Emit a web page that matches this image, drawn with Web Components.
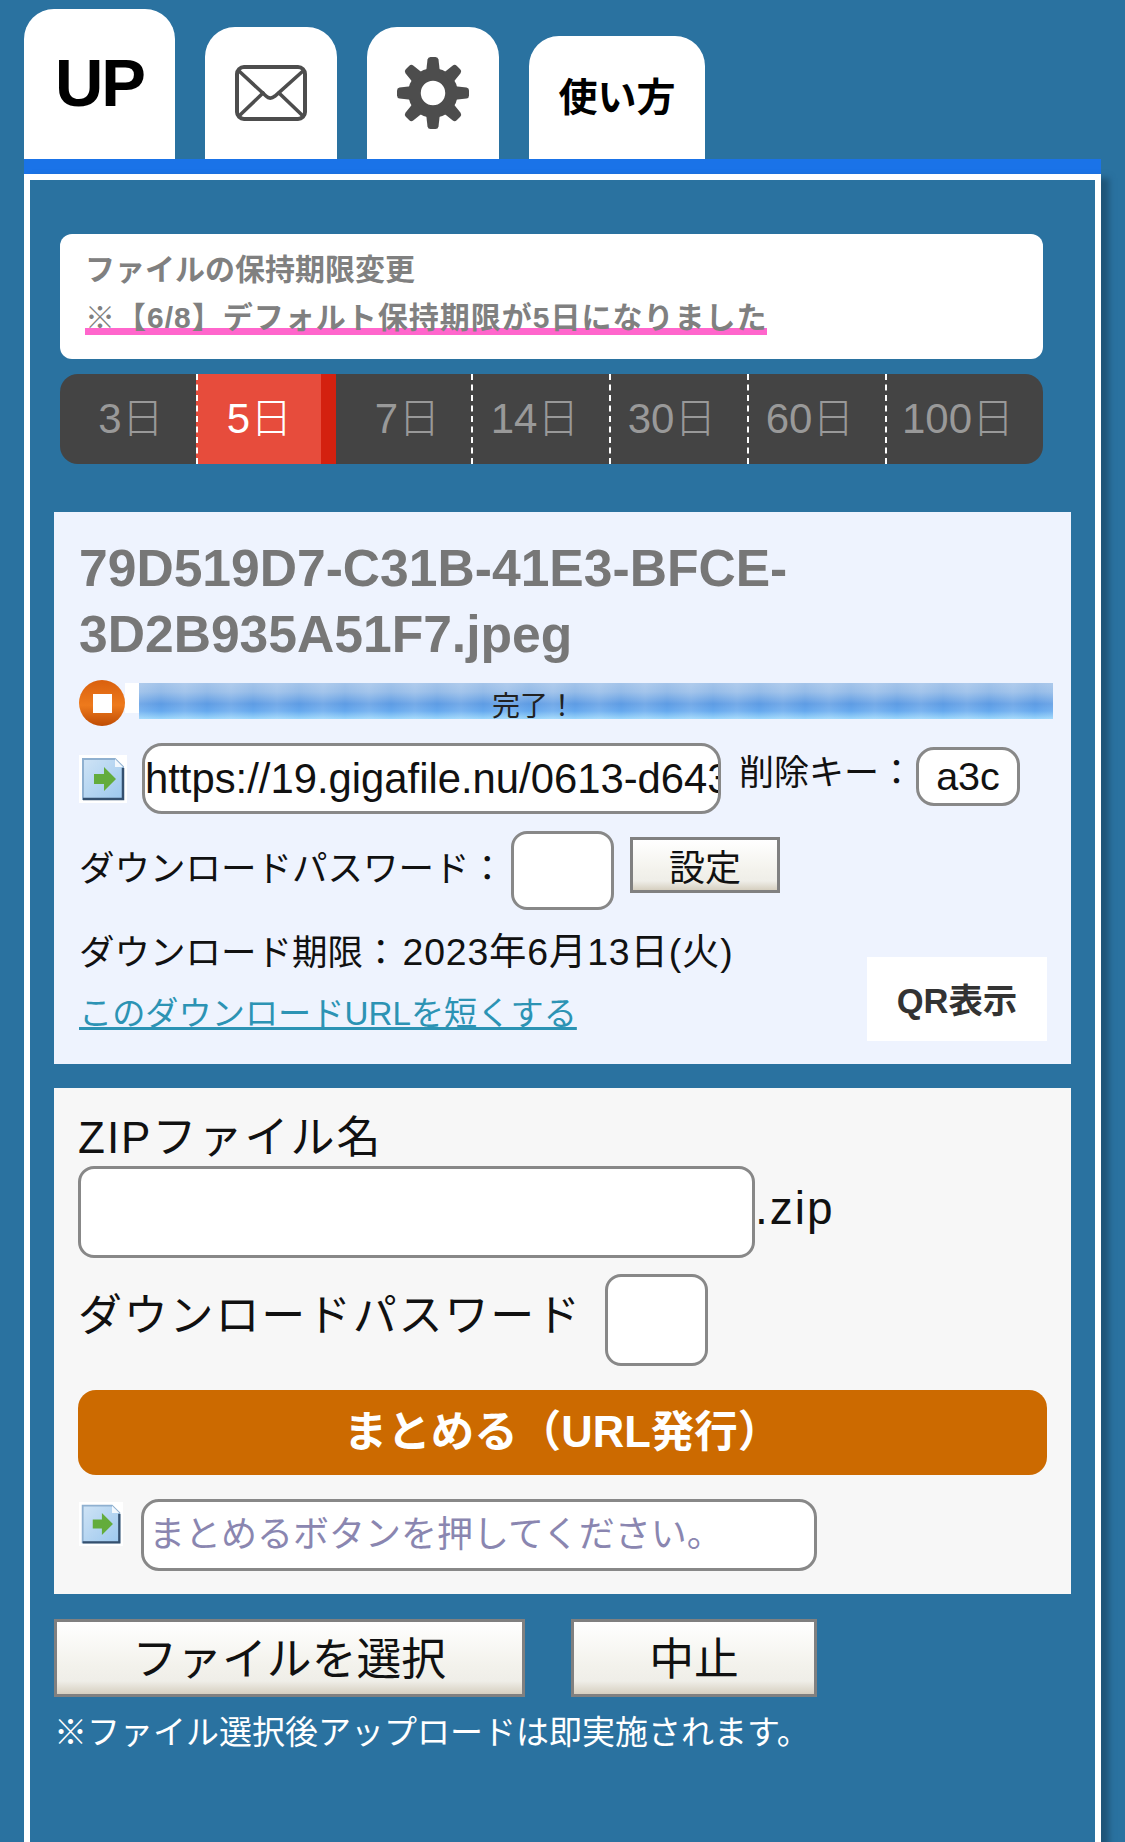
<!DOCTYPE html>
<html lang="ja">
<head>
<meta charset="utf-8">
<title>GigaFile</title>
<style>
  html, body { margin: 0; height: 1842px; overflow: hidden; }
  body { background: #2a72a0; color: #111; font-family: "Liberation Sans", "Noto Sans CJK JP", sans-serif; }
</style>
</head>
<body>
<gf-tabs>
  <gf-tab style="--w:151px;--h:150px;--fs:67px;--ls:-2px;--pb:4px">UP</gf-tab>
  <gf-tab style="--w:132px;--h:132px">
    <svg width="72" height="56" viewBox="0 0 72 56" fill="none" stroke="#4d4d4d" stroke-width="3.6" stroke-linecap="round">
      <rect x="2" y="2" width="68" height="52" rx="7" stroke-width="4"/>
      <path d="M4 6 L31 31 Q35 35 40 31 L68 6"/>
      <path d="M4 51 L28 28 M68 51 L44 28"/>
    </svg>
  </gf-tab>
  <gf-tab style="--w:132px;--h:132px">
    <svg width="72" height="72" viewBox="0 0 72 72" fill="#4d4d4d">
      <circle cx="36" cy="36" r="18.5" fill="none" stroke="#4d4d4d" stroke-width="12.5"/>
      <g>
        <path d="M29 16 L30.5 2.5 Q31 0 33.5 0 H38.5 Q41 0 41.5 2.5 L43 16Z"/>
        <path transform="rotate(45 36 36)" d="M29 16 L30.5 2.5 Q31 0 33.5 0 H38.5 Q41 0 41.5 2.5 L43 16Z"/>
        <path transform="rotate(90 36 36)" d="M29 16 L30.5 2.5 Q31 0 33.5 0 H38.5 Q41 0 41.5 2.5 L43 16Z"/>
        <path transform="rotate(135 36 36)" d="M29 16 L30.5 2.5 Q31 0 33.5 0 H38.5 Q41 0 41.5 2.5 L43 16Z"/>
        <path transform="rotate(180 36 36)" d="M29 16 L30.5 2.5 Q31 0 33.5 0 H38.5 Q41 0 41.5 2.5 L43 16Z"/>
        <path transform="rotate(225 36 36)" d="M29 16 L30.5 2.5 Q31 0 33.5 0 H38.5 Q41 0 41.5 2.5 L43 16Z"/>
        <path transform="rotate(270 36 36)" d="M29 16 L30.5 2.5 Q31 0 33.5 0 H38.5 Q41 0 41.5 2.5 L43 16Z"/>
        <path transform="rotate(315 36 36)" d="M29 16 L30.5 2.5 Q31 0 33.5 0 H38.5 Q41 0 41.5 2.5 L43 16Z"/>
      </g>
    </svg>
  </gf-tab>
  <gf-tab style="--w:176px;--h:123px;--fs:39px">使い方</gf-tab>
</gf-tabs>

<gf-frame>
  <gf-notice>
    <span slot="title">ファイルの保持期限変更</span>
    ※【6/8】デフォルト保持期限が5日になりました
  </gf-notice>
  <gf-period>
    <gf-period-item style="--w:136px;--pl:6px">3日</gf-period-item>
    <gf-period-item style="--w:140px" active>5日</gf-period-item>
    <gf-period-item style="--w:135px;--pl:8px" nosep>7日</gf-period-item>
    <gf-period-item style="--w:138px;--pr:12px">14日</gf-period-item>
    <gf-period-item style="--w:138px;--pr:14px">30日</gf-period-item>
    <gf-period-item style="--w:138px;--pr:14px">60日</gf-period-item>
    <gf-period-item style="--w:158px;--pr:14px">100日</gf-period-item>
  </gf-period>

  <gf-file-panel>
    <gf-progress slot="progress">完了！</gf-progress>
    <gf-box slot="url" style="--w:579px;--h:71px;--r:20px;--fs:41.8px;--pad:0px">https://19.gigafile.nu/0613-d6431f2b0c</gf-box>
    <gf-box slot="key" style="--w:104px;--h:59px;--r:18px;--fs:39.5px;--pad:0px;--align:center;margin-top:-4px">a3c</gf-box>
  </gf-file-panel>

  <gf-zip-panel></gf-zip-panel>

  <gf-actions></gf-actions>
</gf-frame>

<script>
const FONT = '"Liberation Sans", "Noto Sans CJK JP", sans-serif';

// every component just stamps its html into an open shadow root
const define = (tag, html) => {
  const template = document.createElement('template');
  template.innerHTML = html;
  customElements.define(tag, class extends HTMLElement {
    constructor() {
      super();
      this.attachShadow({ mode: 'open' });
      this.shadowRoot.appendChild(template.content.cloneNode(true));
    }
  });
};

const docIcon = `<svg width="48" height="48" viewBox="0 0 48 48" style="display:block;flex:none;filter:blur(.5px)">
  <rect width="48" height="48" fill="#fff"/>
  <defs><linearGradient id="d" x1="0" y1="0" x2="1" y2="1"><stop offset="0" stop-color="#cfe3f5"/><stop offset="1" stop-color="#9cc8ee"/></linearGradient></defs>
  <path d="M4 4 H36 L44 12 V44 H4Z" fill="url(#d)" stroke="#8fb0d0" stroke-width="2"/>
  <path d="M44 13 V44 H4" fill="none" stroke="#34506f" stroke-width="2.5"/>
  <path d="M36 4 V12 H44Z" fill="#f2f8fd"/>
  <path d="M15 19 H25 V12 L37 24 L25 36 V29 H15Z" fill="#63ac3c"/>
</svg>`;

define('gf-tabs', `<style>
  :host { display: flex; align-items: flex-end; gap: 30px; padding: 9px 0 0 24px; height: 150px; }
</style><slot></slot>`);

define('gf-tab', `<style>
  :host { display: flex; align-items: center; justify-content: center; box-sizing: border-box;
    width: var(--w); height: var(--h); padding-bottom: var(--pb, 0); background: #fff; border-radius: 30px 30px 0 0;
    font: bold var(--fs, 40px)/1 ${FONT}; letter-spacing: var(--ls, 0); color: #000; }
</style><slot></slot>`);

define('gf-frame', `<style>
  :host { display: block; margin-left: 24px; width: 1077px; box-sizing: border-box;
    border-top: 15px solid #1a73e8; }
  .inner { border: 6px solid #fff; border-bottom: 0; height: 1700px; padding: 54px 24px 0; box-sizing: border-box;
    box-shadow: 8px 4px 6px #1f5578; }
</style><div class="inner"><slot></slot></div>`);

define('gf-notice', `<style>
  :host { display: block; margin-left: 6px; width: 983px; height: 125px; box-sizing: border-box;
    padding: 12px 0 0 25px; background: #fff; border-radius: 12px;
    font: bold 30px/48px ${FONT}; color: #808080; }
  .line { display: block; width: 682px; white-space: nowrap; margin-top: 7px; line-height: 34px; letter-spacing: 1px;
    background: linear-gradient(transparent 27px, #ff66cc 27px); }
  .title { display: block; height: 48px; }
</style><span class="title"><slot name="title"></slot></span><span class="line"><slot></slot></span>`);

define('gf-period', `<style>
  :host { display: flex; margin: 15px 0 0 6px; width: 983px; height: 90px; background: #444;
    border-radius: 18px; overflow: hidden; }
</style><slot></slot>`);

define('gf-period-item', `<style>
  :host { display: flex; align-items: center; justify-content: center; box-sizing: border-box; height: 90px;
    width: var(--w); font: 300 42px/1 ${FONT}; color: #999; border-left: 2px dashed #fff;
    padding: 0 var(--pr, 0) 0 var(--pl, 0); }
  :host(:first-child), :host([nosep]) { border-left: 0; }
  :host([active]) { background: #e74c3c; color: #fff; border-right: 15px solid #d4210f; }
</style><slot></slot>`);

define('gf-box', `<style>
  :host { display: flex; align-items: center; justify-content: var(--align, flex-start); box-sizing: border-box; flex: none;
    width: var(--w); height: var(--h); background: #fff; border: 3px solid #888; border-radius: var(--r);
    padding: 0 var(--pad); font: var(--fs)/1 ${FONT}; color: var(--c, #111); overflow: hidden; white-space: nowrap; }
</style><slot></slot>`);

define('gf-button', `<style>
  :host { display: flex; align-items: center; justify-content: center; box-sizing: border-box; flex: none;
    width: var(--w); height: var(--h); border: 3px solid #808080; font: var(--fs)/1 ${FONT}; color: #111;
    padding-top: var(--pt, 0);
    background: linear-gradient(#fff 0, #f3f2ec 60%, #efeee8 82%, #d6cfc0 100%); }
</style><slot></slot>`);

define('gf-progress', `<style>
  :host { display: flex; align-items: flex-start; height: 45px; }
  svg { flex: none; display: block; filter: blur(.6px); }
  .gap { width: 14px; height: 30px; margin-top: 3px; background: #fff; flex: none; }
  .bar { box-sizing: border-box; width: 915px; height: 36px; margin-top: 3px; padding: 9px 0 0 353px;
    font: 28px/30px ${FONT}; color: #222; overflow: hidden;
    background:
      repeating-linear-gradient(90deg, rgba(255,255,255,.14) 0, rgba(255,255,255,0) 22px, rgba(255,255,255,.14) 46px),
      linear-gradient(#a3c3e9 0, #94bbe8 25%, #5e9ce4 58%, #66a9ee 78%, #9ad6fb 100%); }
</style>
<svg width="46" height="46" viewBox="0 0 46 46">
  <defs><linearGradient id="o" x1="0" y1="0" x2="0" y2="1"><stop offset="0" stop-color="#d9600e"/><stop offset=".55" stop-color="#ee7a1c"/><stop offset="1" stop-color="#bf4c04"/></linearGradient></defs>
  <circle cx="23" cy="23" r="23" fill="url(#o)"/>
  <rect x="14" y="14" width="19" height="19" fill="#fff"/>
</svg>
<div class="gap"></div>
<div class="bar"><slot></slot></div>`);

define('gf-file-panel', `<style>
  :host { display: block; margin-top: 48px; height: 552px; box-sizing: border-box; padding: 23px 24px 24px 25px;
    background: #eef3fe; font-family: ${FONT}; }
  .name { font: bold 51.6px/66px "Liberation Sans", sans-serif; color: #777; width: 800px; }
  .progress { display: block; margin-top: 13px; margin-right: -6px; }
  .row { display: flex; align-items: center; }
  .url { margin-top: 18px; height: 71px; gap: 15px; }
  .del { font-size: 35px; margin: -18px 0 0 3px; white-space: nowrap; width: 162px; }
  .pass { margin-top: 17px; height: 79px; font-size: 35.5px; }
  .pass input { box-sizing: border-box; width: 103px; height: 79px; margin: 0 16px 0 0; background: #fff;
    border: 3px solid #888; border-radius: 16px; padding: 0; }
  .pass .label { width: 432px; white-space: nowrap; margin-top: -10px; }
  .foot { display: flex; align-items: flex-end; justify-content: space-between; margin-top: 17px; }
  .line { font-size: 35.5px; line-height: 50px; white-space: nowrap; }
  .line b { font-weight: normal; font-size: 37.4px; letter-spacing: .85px; margin-left: 4px; }
  a { display: block; margin: 11px 0 2px; font-size: 33.2px; line-height: 50px; color: #2c93b4; text-decoration: underline; }
  .qr { display: flex; align-items: center; justify-content: center; box-sizing: border-box; width: 180px; height: 84px;
    padding-bottom: 3px; background: #fff; font-weight: bold; font-size: 34.5px; color: #333; }
</style>
<div class="name">79D519D7-C31B-41E3-BFCE-<br>3D2B935A51F7.jpeg</div>
<div class="progress"><slot name="progress"></slot></div>
<div class="row url">${docIcon}<slot name="url"></slot><span class="del">削除キー：</span><slot name="key"></slot></div>
<div class="row pass">
  <span class="label">ダウンロードパスワード：</span><input type="text" aria-label="ダウンロードパスワード">
  <gf-button style="--w:150px;--h:56px;--fs:36px;--pt:8px;margin-top:-12px">設定</gf-button>
</div>
<div class="foot">
  <div>
    <div class="line">ダウンロード期限：<b>2023年6月13日(火)</b></div>
    <a href="#">このダウンロードURLを短くする</a>
  </div>
  <div class="qr">QR表示</div>
</div>`);

define('gf-zip-panel', `<style>
  :host { display: block; margin-top: 24px; height: 506px; box-sizing: border-box; padding: 24px 24px 0;
    background: #f7f7f7; font-family: ${FONT}; }
  .label { font-size: 44px; line-height: 52px; letter-spacing: 2px; white-space: nowrap; }
  .row { display: flex; align-items: center; }
  input { box-sizing: border-box; background: #fff; border: 3px solid #888; border-radius: 16px; margin: 0; padding: 0; }
  .zipname { margin-top: 2px; height: 92px; }
  .zipname input { width: 677px; height: 92px; }
  .zipname span { font-size: 46px; letter-spacing: 2px; margin: -8px 0 0 0; }
  .pass { margin-top: 16px; height: 92px; }
  .pass span { width: 527px; font-size: 44px; letter-spacing: 1.8px; margin-top: -16px; white-space: nowrap; }
  .pass input { width: 103px; height: 92px; }
  .go { display: flex; align-items: center; justify-content: center; box-sizing: border-box; margin-top: 24px; width: 969px; height: 85px; background: #cc6a00;
    border-radius: 18px; color: #fff; font-weight: bold; font-size: 43.5px; padding-bottom: 9px; }
  .result { display: flex; align-items: flex-start; margin-top: 24px; gap: 18px; padding-left: 1px; }
  .result svg { margin-top: 3px; width: 44px; height: 44px; }
</style>
<div class="label">ZIPファイル名</div>
<div class="row zipname"><input type="text" aria-label="ZIPファイル名"><span>.zip</span></div>
<div class="row pass"><span>ダウンロードパスワード</span><input type="text" aria-label="ダウンロードパスワード"></div>
<div class="go">まとめる（URL発行）</div>
<div class="result">${docIcon}<gf-box style="--w:676px;--h:72px;--r:18px;--fs:36px;--pad:5px;--c:#8a86b0">まとめるボタンを押してください。</gf-box></div>`);

define('gf-actions', `<style>
  :host { display: block; margin-top: 25px; font-family: ${FONT}; }
  .btns { display: flex; gap: 46.5px; }
  p { margin: 11px 0 0; color: #fff; font-size: 33px; line-height: 50px; white-space: nowrap; }
</style>
<div class="btns">
  <gf-button style="--w:470.5px;--h:78px;--fs:44.8px;--pt:3px">ファイルを選択</gf-button>
  <gf-button style="--w:246px;--h:78px;--fs:44.8px;--pt:3px">中止</gf-button>
</div>
<p>※ファイル選択後アップロードは即実施されます。</p>`);
</script>
</body>
</html>
